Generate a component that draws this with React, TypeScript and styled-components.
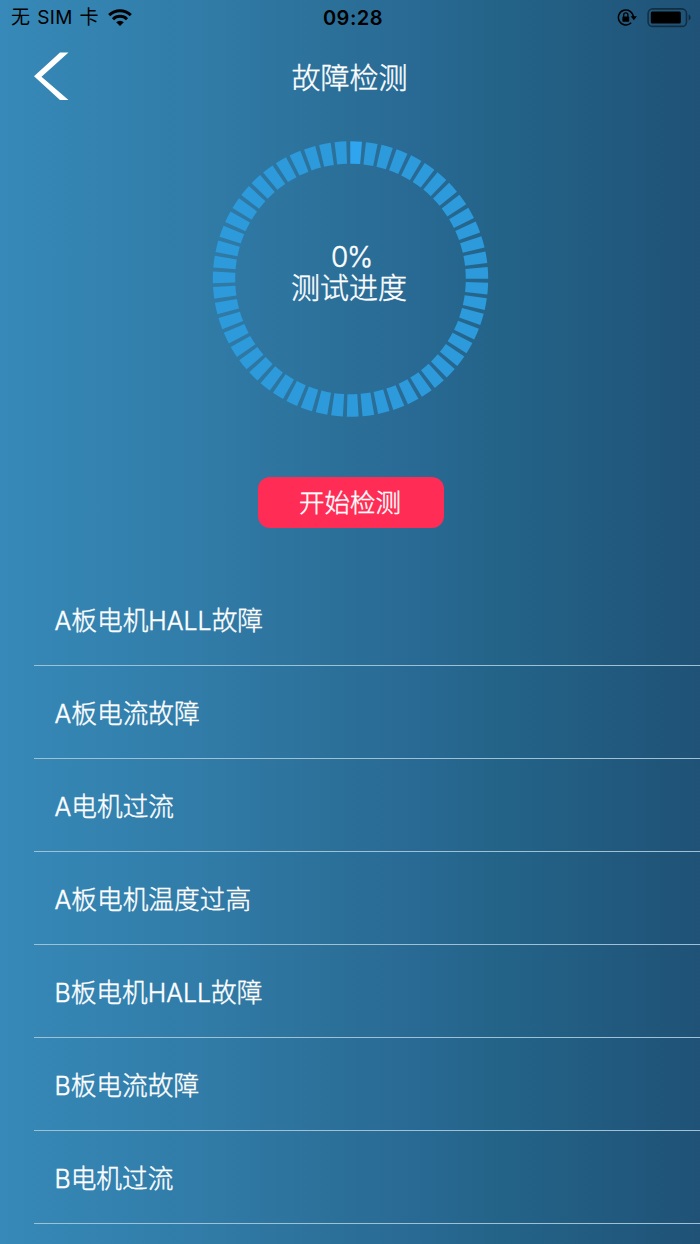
import React from 'react';
import styled, { createGlobalStyle } from 'styled-components';

const GlobalStyle = createGlobalStyle`
  * { box-sizing: border-box; }
  body { margin: 0; overflow: hidden; }
`;

const Screen = styled.div`
  width: 700px;
  height: 1244px;
  overflow: hidden;
  display: flex;
  flex-direction: column;
  color: #fff;
  font-family: Inter, 'Noto Sans CJK SC', sans-serif;
  font-weight: 300;
  -webkit-text-stroke: 0.4px currentColor;
  background: linear-gradient(90deg, #3689b8 0%, #317ca8 28%, #2b7099 48%, #296a95 59%, #246489 70%, #225b80 85%, #1f5276 100%);
`;

const StatusBar = styled.header`
  height: 36px;
  flex: none;
  display: grid;
  grid-template-columns: 1fr auto 1fr;
  align-items: center;
  padding: 0 9px 0 11px;
  color: #000;
  -webkit-text-stroke: 0;
`;

const Carrier = styled.div`
  display: flex;
  align-items: center;
  gap: 9px;
  font-size: 19px;
  font-weight: 400;
  letter-spacing: 0.4px;
  word-spacing: 1px;
  line-height: 36px;
  white-space: pre;
`;

const Clock = styled.div`
  font-size: 20px;
  font-weight: 600;
  letter-spacing: 0.5px;
  line-height: 36px;
  padding-left: 4px;
`;

const Indicators = styled.div`
  display: flex;
  justify-content: flex-end;
  align-items: center;
  gap: 10px;
`;

const NavBar = styled.nav`
  height: 84px;
  flex: none;
  display: grid;
  grid-template-columns: 101px 1fr 102px;
  align-items: center;
  justify-items: center;
`;

const BackButton = styled.button`
  border: 0;
  padding: 0;
  background: none;
  width: 36px;
  height: 50px;
  display: flex;
  margin-bottom: 4px;
`;

const Title = styled.h1`
  margin: 2px 0 0;
  font-size: 29px;
  font-weight: 300;
  line-height: 40px;
`;

const Progress = styled.section`
  display: grid;
  justify-content: center;
  flex: none;
  height: 357px;
  padding: 20px 0 0 1px;
  > * { grid-area: 1 / 1; }
`;

const ProgressLabel = styled.div`
  height: 278px;
  display: flex;
  flex-direction: column;
  align-items: center;
  padding: 102px 3px 0 0;
  font-size: 29px;
  line-height: 31px;
`;

const Percent = styled.span`
  padding-left: 5px;
  font-size: 28px;
  letter-spacing: -1.2px;
`;

const StartButton = styled.button`
  flex: none;
  align-self: center;
  width: 186px;
  height: 51px;
  margin-left: 1px;
  border: 0;
  border-radius: 12px;
  padding: 0 1px 4px 0;
  background: #ff2d55;
  color: #fff;
  font: inherit;
  font-size: 25.5px;
`;

const FaultList = styled.ul`
  list-style: none;
  margin: 45px 0 0 34px;
  padding: 0;
`;

const FaultItem = styled.li`
  height: 93px;
  padding: 1px 0 0 20.5px;
  border-bottom: 1px solid #9fc1d6;
  font-size: 25.7px;
  line-height: 93px;
`;

const Latin = styled.span`
  font-size: 24.9px;
`;

const SEGMENTS = 55;
const STEP = 360 / SEGMENTS;
const SWEEP = 4.9;

const point = (radius: number, degrees: number) => {
  const a = (degrees * Math.PI) / 180;
  return `${(138.5 + radius * Math.sin(a)).toFixed(2)} ${(139 - radius * Math.cos(a)).toFixed(2)}`;
};

const Ring = () => (
  <svg width="278" height="278" viewBox="0 0 278 278">
    {Array.from({ length: SEGMENTS }, (_, i) => {
      const a = i * STEP - 0.1;
      const b = a + SWEEP;
      return (
        <path
          key={i}
          fill={i === 0 ? '#2fa5f0' : '#2d9adb'}
          d={`M${point(137.7, a)} A137.7 137.7 0 0 1 ${point(137.7, b)} L${point(115.3, b)} A115.3 115.3 0 0 0 ${point(115.3, a)}Z`}
        />
      );
    })}
  </svg>
);

const WifiIcon = () => (
  <svg width="24" height="18" viewBox="0 0 24 18" fill="none" stroke="#000" strokeWidth="3">
    <path d="M1.2 6.1a15.6 15.6 0 0 1 21.6 0" />
    <path d="M5 10.2a10 10 0 0 1 14 0" />
    <path d="M12 17 8.2 13.2a5.5 5.5 0 0 1 7.6 0z" fill="#000" stroke="none" />
  </svg>
);

const RotationLockIcon = () => (
  <svg width="20" height="18" viewBox="0 0 20 18" fill="none" stroke="#000">
    <path d="M14.2 13.8A7.5 7.5 0 1 1 16.4 8" strokeWidth="1.5" />
    <path d="M13.7 7.2h6.2l-3.1 4z" fill="#000" stroke="none" />
    <rect x="5.4" y="7.4" width="6.8" height="5.4" rx=".7" fill="#000" stroke="none" />
    <path d="M6.7 7.9V6a2.1 2.1 0 0 1 4.2 0v1.9" strokeWidth="1.3" />
  </svg>
);

const BatteryIcon = () => (
  <svg width="44" height="20" viewBox="0 0 44 20">
    <rect x="1.1" y=".9" width="38.4" height="17.5" rx="4.5" fill="none" stroke="#000" strokeOpacity=".45" strokeWidth="1.6" />
    <rect x="3.8" y="3.6" width="30" height="12" rx="1.5" fill="#000" />
    <path d="M41.6 6.6c2.6.8 2.6 5.2 0 6z" fill="#000" fillOpacity=".5" />
  </svg>
);

const faults: [string, string, string?, string?][] = [
  ['A', '板电机', 'HALL', '故障'],
  ['A', '板电流故障'],
  ['A', '电机过流'],
  ['A', '板电机温度过高'],
  ['B', '板电机', 'HALL', '故障'],
  ['B', '板电流故障'],
  ['B', '电机过流'],
];

export default function App() {
  return (
    <Screen>
      <GlobalStyle />
      <StatusBar>
        <Carrier>无 SIM 卡<WifiIcon /></Carrier>
        <Clock>09:28</Clock>
        <Indicators>
          <RotationLockIcon />
          <BatteryIcon />
        </Indicators>
      </StatusBar>
      <NavBar>
        <BackButton aria-label="返回">
          <svg width="36" height="50" viewBox="0 0 36 50">
            <path d="M27 1.5H35.5L8.5 25.7 35.5 49H27L1 25.3z" fill="#fff" />
          </svg>
        </BackButton>
        <Title>故障检测</Title>
      </NavBar>
      <Progress>
        <Ring />
        <ProgressLabel>
          <Percent>0%</Percent>
          <span>测试进度</span>
        </ProgressLabel>
      </Progress>
      <StartButton>开始检测</StartButton>
      <FaultList>
        {faults.map(([board, part, sensor, suffix]) => (
          <FaultItem key={board + part + sensor}>
            <Latin>{board}</Latin>{part}
            {sensor && <Latin>{sensor}</Latin>}
            {suffix}
          </FaultItem>
        ))}
      </FaultList>
    </Screen>
  );
}
